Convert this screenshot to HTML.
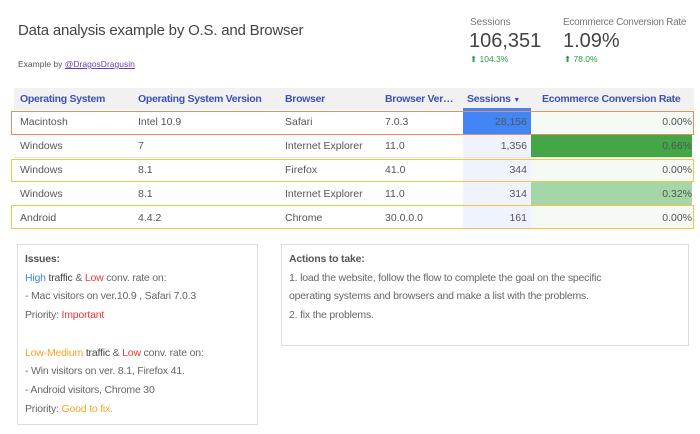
<!DOCTYPE html>
<html><head><meta charset="utf-8"><style>
body{margin:0;width:700px;height:434px;background:#fff;font-family:"Liberation Sans",sans-serif;position:relative;overflow:hidden;color:#555}
.a{position:absolute;white-space:nowrap}
.th{position:absolute;top:88px;height:22px;line-height:22px;font-size:10.5px;font-weight:bold;color:#3f51b5;letter-spacing:-0.3px}
.row{position:absolute;left:14px;width:680px;height:24px;font-size:10.5px;color:#555}
.row span{position:absolute;top:0;line-height:24px;white-space:nowrap}
.box{position:absolute;border:1px solid #ddd;font-size:10.5px;line-height:18.7px;color:#666;padding:5px 0 0 7px;box-sizing:border-box;letter-spacing:-0.2px}
</style></head><body>
<div class="a" style="left:18px;top:22px;font-size:15px;color:#444;letter-spacing:-0.2px">Data analysis example by O.S. and Browser</div>
<div class="a" style="left:18px;top:59px;font-size:8.5px;color:#555">Example by <span style="color:#6a3fb5;text-decoration:underline">@DragosDragusin</span></div>
<div class="a" style="left:470px;top:17px;font-size:10px;color:#777">Sessions</div>
<div class="a" style="left:469px;top:30px;font-size:20px;color:#444">106,351</div>
<div class="a" style="left:470px;top:54px;font-size:8.5px;color:#2e9e44">⬆ 104.3%</div>
<div class="a" style="left:563px;top:17px;font-size:10px;color:#777;letter-spacing:-0.3px">Ecommerce Conversion Rate</div>
<div class="a" style="left:563px;top:30px;font-size:20px;color:#444">1.09%</div>
<div class="a" style="left:564px;top:54px;font-size:8.5px;color:#2e9e44">⬆ 78.0%</div>

<div class="a" style="left:14px;top:88px;width:680px;height:22px;background:#f1f1f1"></div>
<div class="a" style="left:463px;top:108px;width:68px;height:2px;background:#4285f4"></div>
<div class="th" style="left:20px">Operating System</div>
<div class="th" style="left:138px">Operating System Version</div>
<div class="th" style="left:285px">Browser</div>
<div class="th" style="left:385px">Browser Ver…</div>
<div class="th" style="left:467px">Sessions <span style="font-size:7px">▼</span></div>
<div class="th" style="left:542px">Ecommerce Conversion Rate</div>

<div class="a" style="left:463px;top:110px;width:68px;height:120px;background:#eef3fd"></div>
<div class="a" style="left:463px;top:110px;width:68px;height:24px;background:#4285f4"></div>
<div class="a" style="left:531px;top:110px;width:161px;height:120px;background:#f5faf5"></div>
<div class="a" style="left:531px;top:134px;width:161px;height:24px;background:#43a748"></div>
<div class="a" style="left:531px;top:182px;width:161px;height:24px;background:#a5d6a7"></div>
<div class="a" style="left:14px;top:157px;width:680px;height:1px;background:#e6e6e6"></div>
<div class="a" style="left:14px;top:181px;width:680px;height:1px;background:#e6e6e6"></div>

<div class="row" style="top:110px"><span style="left:6px">Macintosh</span><span style="left:124px">Intel 10.9</span><span style="left:271px">Safari</span><span style="left:371px">7.0.3</span><span style="right:167px">28,156</span><span style="right:2px">0.00%</span></div>
<div class="row" style="top:134px"><span style="left:6px">Windows</span><span style="left:124px">7</span><span style="left:271px">Internet Explorer</span><span style="left:371px">11.0</span><span style="right:167px">1,356</span><span style="right:2px">0.66%</span></div>
<div class="row" style="top:158px"><span style="left:6px">Windows</span><span style="left:124px">8.1</span><span style="left:271px">Firefox</span><span style="left:371px">41.0</span><span style="right:167px">344</span><span style="right:2px">0.00%</span></div>
<div class="row" style="top:182px"><span style="left:6px">Windows</span><span style="left:124px">8.1</span><span style="left:271px">Internet Explorer</span><span style="left:371px">11.0</span><span style="right:167px">314</span><span style="right:2px">0.32%</span></div>
<div class="row" style="top:206px"><span style="left:6px">Android</span><span style="left:124px">4.4.2</span><span style="left:271px">Chrome</span><span style="left:371px">30.0.0.0</span><span style="right:167px">161</span><span style="right:2px">0.00%</span></div>

<div class="a" style="left:11px;top:111px;width:681px;height:22px;border:1px solid #f08a5d"></div>
<div class="a" style="left:11px;top:159px;width:681px;height:21px;border:1px solid #fbc343"></div>
<div class="a" style="left:11px;top:205px;width:681px;height:22px;border:1px solid #fbc343"></div>

<div class="box" style="left:17px;top:244px;width:241px;height:181px">
<b style="color:#555">Issues:</b><br>
<span style="color:#4285f4">High</span> <span style="color:#444">traffic</span> &amp; <span style="color:#e53935">Low</span> conv. rate on:<br>
- Mac visitors on ver.10.9 , Safari 7.0.3<br>
Priority: <span style="color:#e53935">Important</span><br><br>
<span style="color:#f5a623">Low-Medium</span> <span style="color:#444">traffic</span> &amp; <span style="color:#e53935">Low</span> conv. rate on:<br>
- Win visitors on ver. 8.1, Firefox 41.<br>
- Android visitors, Chrome 30<br>
Priority: <span style="color:#f5a623">Good to fix.</span>
</div>
<div class="box" style="left:281px;top:244px;width:408px;height:102px">
<b style="color:#555">Actions to take:</b><br>
1. load the website, follow the flow to complete the goal on the specific<br>
operating systems and browsers and make a list with the problems.<br>
2. fix the problems.
</div>
</body></html>
